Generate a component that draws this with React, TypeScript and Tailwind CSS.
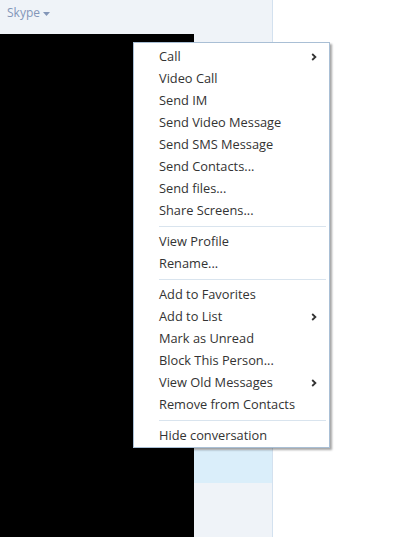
import React from "react";

type Item = { label: string; sub?: boolean } | "sep";

const items: Item[] = [
  { label: "Call", sub: true },
  { label: "Video Call" },
  { label: "Send IM" },
  { label: "Send Video Message" },
  { label: "Send SMS Message" },
  { label: "Send Contacts..." },
  { label: "Send files..." },
  { label: "Share Screens..." },
  "sep",
  { label: "View Profile" },
  { label: "Rename..." },
  "sep",
  { label: "Add to Favorites" },
  { label: "Add to List", sub: true },
  { label: "Mark as Unread" },
  { label: "Block This Person..." },
  { label: "View Old Messages", sub: true },
  { label: "Remove from Contacts" },
  "sep",
  { label: "Hide conversation" },
];

function Chevron() {
  return (
    <svg width="6" height="8" viewBox="0 0 6 8" className="shrink-0">
      <path d="M1.2 1 L4.4 4 L1.2 7" fill="none" stroke="#333" strokeWidth="1.8" />
    </svg>
  );
}

export default function App() {
  return (
    <div
      className="relative w-[404px] h-[537px] flex bg-white overflow-hidden"
      style={{ fontFamily: '"Open Sans", "Noto Sans", sans-serif' }}
    >
      <div className="w-[273px] h-full flex flex-col bg-[#eff3f8] border-r border-[#d3e1ef]">
        <div className="h-[34px] flex items-start pl-[7px] pt-[5px]">
          <span className="text-[12px] text-[#8396b8] leading-[16px]">Skype</span>
          <svg width="7" height="4" viewBox="0 0 7 4" className="ml-[3px] mt-[7px]">
            <path d="M0 0 H7 L3.5 4 Z" fill="#8396b8" />
          </svg>
        </div>
        <div className="flex-1 flex">
          <div className="w-[194px] bg-black" />
          <div className="flex-1 flex flex-col">
            <div className="h-[416px]" />
            <div className="h-[33px] bg-[#daeefa]" />
          </div>
        </div>
      </div>

      <div className="absolute left-[133px] top-[42px] w-[197px] bg-white border border-[#a9bfd5] shadow-[2px_2px_2px_rgba(0,0,0,0.35)] pt-[3px]">
        {items.map((it, i) =>
          it === "sep" ? (
            <div key={i} className="h-[9px] flex items-center pl-[25px] pr-[3px]">
              <div className="h-px w-full bg-[#d9e4ee]" />
            </div>
          ) : (
            <div
              key={i}
              className="h-[22px] flex items-center justify-between pl-[25px] pr-[12px] text-[12.8px] text-[#333333]"
            >
              <span>{it.label}</span>
              {it.sub && <Chevron />}
            </div>
          )
        )}
      </div>
    </div>
  );
}
